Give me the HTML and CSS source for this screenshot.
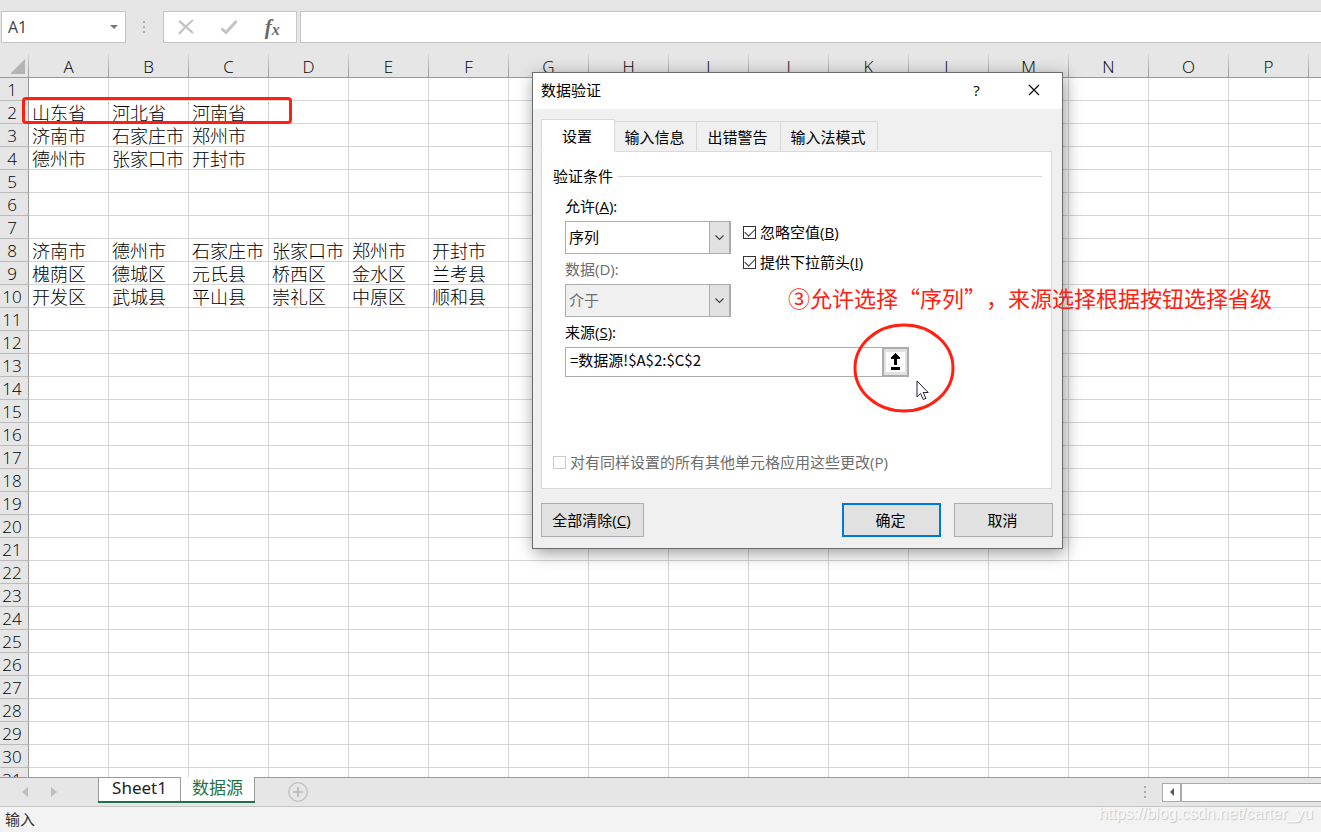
FILE: index.html
```html
<!DOCTYPE html>
<html lang="zh-CN">
<head>
<meta charset="utf-8">
<title>数据源</title>
<link rel="stylesheet" href="styles.css">
</head>
<body>
<header class="formula-bar">
  <div class="name-box">
    <input class="name-input" type="text" value="A1" aria-label="名称框">
    <svg class="name-arrow" width="8" height="4" viewBox="0 0 8 4"><path d="M0 0h8L4 4z" fill="#777"/></svg>
  </div>
  <svg class="grip" width="3" height="13" viewBox="0 0 3 13" fill="#ababab"><path d="M0 0h2v2H0zM0 5h2v2H0zM0 10h2v2H0z"/></svg>
  <div class="formula-tools">
    <button type="button" class="tool" aria-label="取消输入"><svg width="18" height="16" viewBox="0 0 18 16"><path d="M2 2c4 3 9 8 14 12M16 1C11 5 6 10 2 15" fill="none" stroke="#c3c3c3" stroke-width="2.2"/></svg></button>
    <button type="button" class="tool" aria-label="确认输入"><svg width="18" height="16" viewBox="0 0 18 16"><path d="M1.500 9.500L6 13.500 16.500 2" fill="none" stroke="#c3c3c3" stroke-width="3"/></svg></button>
    <button type="button" class="tool fx" aria-label="插入函数"><span>f</span><span class="fx-x">x</span></button>
  </div>
  <input class="formula-input" type="text" aria-label="编辑栏">
</header>

<main class="grid-area">
  <table class="grid">
    <thead><tr id="columns"><th class="corner"><svg width="15" height="15" viewBox="0 0 15 15"><path d="M15 0v15H0z" fill="#b4b4b4"/></svg></th></tr></thead>
    <tbody id="rows"></tbody>
  </table>
  <div class="range-mark"></div>
</main>

<footer>
  <div class="sheet-bar">
    <div class="sheet-nav">
      <button type="button" aria-label="上一个"><svg width="6" height="10" viewBox="0 0 6 10"><path d="M6 0v10L0 5z" fill="#bdbdbd"/></svg></button>
      <button type="button" aria-label="下一个"><svg width="6" height="10" viewBox="0 0 6 10"><path d="M0 0v10l6-5z" fill="#bdbdbd"/></svg></button>
    </div>
    <div class="sheets">
      <button type="button" class="sheet">Sheet1</button>
      <button type="button" class="sheet current">数据源</button>
    </div>
    <button type="button" class="add-sheet" aria-label="新建工作表"><svg width="20" height="20" viewBox="0 0 20 20" fill="none" stroke="#c0c0c0"><circle cx="10" cy="10" r="9.300" stroke-width="1.300"/><path d="M10 5v10M5 10h10" stroke-width="2"/></svg></button>
    <svg class="scroll-grip" width="3" height="13" viewBox="0 0 3 13" fill="#ababab"><path d="M0 0h2v2H0zM0 5h2v2H0zM0 10h2v2H0z"/></svg>
    <div class="scrollbar">
      <button type="button" aria-label="向左滚动"><svg width="4" height="8" viewBox="0 0 4 8"><path d="M4 0v8L0 4z" fill="#555"/></svg></button>
    </div>
  </div>
  <div class="status-bar">
    <span>输入</span>
    <span class="credit">https://blog.csdn.net/carter_yu</span>
  </div>
</footer>

<section class="dialog" role="dialog" aria-labelledby="dialog-title">
  <div class="dialog-head">
    <h1 id="dialog-title">数据验证</h1>
    <button type="button" class="head-button">?</button>
    <button type="button" class="head-button" aria-label="关闭"><svg width="12" height="12" viewBox="0 0 12 12"><path d="M1 1l10 10M11 1L1 11" stroke="#000" stroke-width="1.200"/></svg></button>
  </div>
  <form class="dialog-body">
    <div class="tabs" role="tablist">
      <button type="button" role="tab" class="tab active">设置</button>
      <button type="button" role="tab" class="tab first">输入信息</button>
      <button type="button" role="tab" class="tab">出错警告</button>
      <button type="button" role="tab" class="tab wide">输入法模式</button>
    </div>
    <div class="panel" role="tabpanel">
      <fieldset>
        <legend><span>验证条件</span></legend>
        <div class="criteria">
          <div class="fields">
            <label for="allow">允许(<u>A</u>):</label>
            <div class="combo"><select id="allow"><option>序列</option></select><span class="combo-arrow"><svg width="9" height="6" viewBox="0 0 9 6"><path d="M.5.500l4 4 4-4" fill="none" stroke="#444" stroke-width="1.200"/></svg></span></div>
            <label for="data" class="muted">数据(D):</label>
            <div class="combo"><select id="data" disabled><option>介于</option></select><span class="combo-arrow"><svg width="9" height="6" viewBox="0 0 9 6"><path d="M.5.500l4 4 4-4" fill="none" stroke="#444" stroke-width="1.200"/></svg></span></div>
          </div>
          <div class="options">
            <label class="check"><input type="checkbox" checked><span>忽略空值(<u>B</u>)</span></label>
            <label class="check"><input type="checkbox" checked><span>提供下拉箭头(<u>I</u>)</span></label>
          </div>
        </div>
        <div class="source">
          <label for="source">来源(<u>S</u>):</label>
          <div class="source-box">
            <input id="source" type="text" value="=数据源!$A$2:$C$2">
            <button type="button" aria-label="选择区域"><svg width="19" height="20" viewBox="0 0 19 20"><path d="M0 0h19v20H0z" fill="#fff"/><path d="M9 1h1v1h1v1h1v1h1v1h1v2h-3v6H8V7H5V5h1V4h1V3h1V2h1zM5 15h9v3H5z" fill="#000"/></svg></button>
          </div>
        </div>
      </fieldset>
      <label class="check muted apply"><input type="checkbox" disabled><span>对有同样设置的所有其他单元格应用这些更改(P)</span></label>
    </div>
    <div class="actions">
      <button type="button" class="action clear">全部清除(<u>C</u>)</button>
      <button type="submit" class="action primary">确定</button>
      <button type="button" class="action">取消</button>
    </div>
  </form>
</section>

<svg class="ring" width="102" height="90" viewBox="0 0 102 90"><ellipse cx="51" cy="45" rx="49" ry="43" fill="none" stroke="#ff2012" stroke-width="3"/></svg>
<svg class="pointer" width="14" height="21" viewBox="0 0 14 21"><path d="M1 1v16l3.500-3.500 2.800 6 2.700-1.200-2.800-5.800h5z" fill="#fff" stroke="#222236"/></svg>
<p class="note">③允许选择“序列”，来源选择根据按钮选择省级</p>
<script src="grid.js"></script>
</body>
</html>
```
FILE: grid.js
```js
const columns = [..."ABCDEFGHIJKLMNOP", ""];
const rowCount = 31;
const cells = {
  2: ["山东省", "河北省", "河南省"],
  3: ["济南市", "石家庄市", "郑州市"],
  4: ["德州市", "张家口市", "开封市"],
  8: ["济南市", "德州市", "石家庄市", "张家口市", "郑州市", "开封市"],
  9: ["槐荫区", "德城区", "元氏县", "桥西区", "金水区", "兰考县"],
  10: ["开发区", "武城县", "平山县", "崇礼区", "中原区", "顺和县"]
};

function add(parent, tag, text) {
  const element = document.createElement(tag);
  element.textContent = text;
  parent.append(element);
  return element;
}

const head = document.getElementById("columns");
for (const letter of columns) add(head, "th", letter);

const body = document.getElementById("rows");
for (let number = 1; number <= rowCount; number++) {
  const row = add(body, "tr", "");
  add(row, "th", number);
  for (let i = 0; i < columns.length; i++) {
    add(row, "td", (cells[number] || [])[i] || "");
  }
}
```
FILE: styles.css
```css
* { box-sizing: border-box; }

body {
  margin: 0;
  height: 100vh;
  display: flex;
  flex-direction: column;
  overflow: hidden;
  position: relative;
  background: #e6e6e6;
  color: #000;
  font: 15px/20px "Open Sans", "Noto Sans CJK SC", sans-serif;
}

button, input, select { font: inherit; color: inherit; margin: 0; }
button { padding: 0; border: 0; background: none; }
svg { display: block; flex: none; }

/* Formula bar */
.formula-bar {
  display: flex;
  align-items: center;
  height: 54px;
  padding: 0 0 0 1px;
  flex: none;
}
.name-box, .formula-tools, .formula-input {
  height: 32px;
  background: #fff;
  border: 1px solid #c6c6c6;
}
.name-box { display: flex; align-items: center; width: 125px; padding: 0 7px 0 6px; }
.name-input { flex: 1; min-width: 0; border: 0; padding: 0; background: none; color: #444; outline: 0; font-size: 16px; }
.grip { margin: 0 17px; }
.formula-tools { display: flex; align-items: center; width: 134px; padding-right: 2px; }
.tool { flex: 1; display: flex; justify-content: center; align-items: center; }
.fx { font: italic bold 21px/24px "Liberation Serif", serif; color: #6b6b6b; }
.fx-x { font-size: 16px; padding-top: 5px; }
.formula-input { flex: 1; margin-left: 3px; border-right: 0; outline: 0; }

/* Grid */
.grid-area { flex: 1; min-height: 0; overflow: hidden; position: relative; background: #fff; }
.grid { border-collapse: separate; border-spacing: 0; table-layout: fixed; width: 1389px; font-size: 18px; line-height: 22px; }
.grid th, .grid td { padding: 0; height: 23px; white-space: nowrap; }
.grid td {
  padding-left: 3px;
  border-right: 1px solid #d4d4d4;
  border-bottom: 1px solid #d4d4d4;
  font-family: "Noto Sans CJK SC", sans-serif;
  font-weight: 300;
}
.grid th { background: #e6e6e6; font-size: 17px; line-height: 20px; font-weight: 300; color: #000; padding-top: 2px; }
.grid thead th {
  width: 80px;
  height: 24px;
  border-bottom: 1px solid #999;
  border-right: 1px solid;
  border-image: linear-gradient(#d8d8d8, #999) 1;
}
.grid thead th:not(.corner) { padding-top: 3px; }
.grid thead .corner { width: 29px; padding: 0; }
.corner svg { margin: 2px 0 0 10px; }
.grid tbody th { border-right: 1px solid #999; border-bottom: 1px solid #bbb; padding-right: 4px; }
.range-mark {
  position: absolute;
  left: 22px;
  top: 43px;
  width: 270px;
  height: 27px;
  border: 3px solid #ff2012;
  border-radius: 4px;
}

/* Sheet bar */
.sheet-bar { display: flex; height: 29px; border-top: 1px solid #9b9b9b; align-items: center; position: relative; background: #e6e6e6; }
.sheet-nav { display: flex; gap: 23px; width: 98px; padding-left: 22px; }
.sheets { display: flex; align-self: flex-start; height: 26px; margin-top: -1px; border-bottom: 2px solid #217346; }
.sheet {
  width: 83px;
  padding-bottom: 3px;
  background: #fff;
  border: solid #9b9b9b;
  border-width: 1px 1px 0;
  font: 17px/20px "Noto Sans", "Noto Sans CJK SC", sans-serif;
  color: #222;
}
.sheet.current { width: 74px; border-width: 0 1px 0 0; color: #217346; }
.add-sheet { margin-left: 33px; }
.scroll-grip { margin: 0 15px 0 auto; }
.scrollbar { width: 159px; height: 19px; background: #fff; border: 1px solid #ababab; border-right: 0; display: flex; }
.scrollbar button { width: 19px; border-right: 2px solid #ababab; display: flex; align-items: center; justify-content: center; }
.status-bar {
  display: flex;
  justify-content: space-between;
  align-items: center;
  height: 26px;
  padding: 0 8px 2px 5px;
  background: #f3f3f3;
  border-top: 1px solid #c6c6c6;
  color: #333;
}
.credit { font: 16px/20px "Liberation Sans", sans-serif; color: #fafafa; text-shadow: 1px 1px 1px #c4c4c4; align-self: flex-start; margin-top: -3px; }

/* Dialog */
.dialog {
  position: absolute;
  left: 532px;
  top: 72px;
  width: 531px;
  border: 1px solid #6c6c6c;
  background: #f0f0f0;
  box-shadow: 2px 4px 16px rgba(0, 0, 0, .4);
}
.dialog-head { display: flex; align-items: center; height: 36px; padding-left: 8px; background: #fff; }
.dialog-head h1 { flex: 1; margin: 0; padding-bottom: 2px; font-size: 15px; font-weight: 400; }
.head-button { width: 57px; height: 36px; padding-bottom: 2px; display: flex; align-items: center; justify-content: center; }
.dialog-body { padding: 10px 9px 11px 8px; }

.tabs { display: flex; align-items: flex-end; margin-bottom: -1px; position: relative; }
.tab { width: 84px; height: 31px; padding-right: 2px; border: 1px solid #d9d9d9; border-left: 0; background: #f0f0f0; }
.tab.first { width: 82px; }
.tab.wide { width: 97px; }
.tab.active { width: 74px; height: 33px; background: #fff; border-left: 1px solid #d9d9d9; border-bottom-color: #fff; }
.panel { margin-right: 1px; padding: 14px 9px 16px 11px; background: #fff; border: 1px solid #d9d9d9; }

fieldset { margin: 0; padding: 0; border: 0; min-width: 0; }
legend { display: flex; align-items: center; gap: 5px; width: 100%; padding: 0; }
legend::after { content: ""; flex: 1; border-top: 1px solid #d9d9d9; }
.criteria { display: flex; gap: 12px; padding: 10px 0 0 12px; }
.fields { width: 166px; }
.fields label, .source > label { display: block; margin-bottom: 5px; }
.muted { color: #6d6d6d; }
.combo { display: flex; position: relative; margin-bottom: 5px; }
.combo select {
  appearance: none;
  width: 100%;
  height: 33px;
  padding: 0 26px 2px 3px;
  border: 1px solid #acacac;
  border-radius: 0;
  background: #fff;
  outline: 0;
}
.combo select:disabled { background: #f0f0f0; color: #6d6d6d; opacity: 1; }
.combo-arrow {
  position: absolute;
  top: 0;
  right: 0;
  width: 22px;
  height: 33px;
  border: 1px solid #acacac;
  border-right-width: 2px;
  background: #e1e1e1;
  display: flex;
  align-items: center;
  justify-content: center;
  pointer-events: none;
}
.options { display: flex; flex-direction: column; gap: 10px; padding-top: 26px; }
.check { display: flex; align-items: center; gap: 4px; }
.check input {
  appearance: none;
  width: 13px;
  height: 13px;
  flex: none;
  border: 1px solid #333;
  background: #fff;
  display: grid;
  place-items: center;
}
.check input:checked::before {
  content: "";
  width: 9px;
  height: 5px;
  margin-bottom: 3px;
  border: solid #333;
  border-width: 0 0 1px 1px;
  transform: rotate(-45deg);
}
.check input:disabled { border-color: #ccc; }
.source { padding-left: 12px; }
.source-box { display: flex; width: 344px; height: 30px; border: 1px solid #acacac; }
.source-box input { flex: 1; min-width: 0; padding: 0 4px 4px; border: 0; outline: 0; font-family: "Noto Sans CJK SC", sans-serif; }
.source-box button {
  width: 26px;
  border: solid #acacac;
  border-width: 1px 1px 1px 2px;
  background: #e1e1e1;
  display: flex;
  align-items: center;
  justify-content: center;
}
.apply { margin-top: 75px; }

.actions { display: flex; gap: 13px; margin-top: 14px; }
.action { width: 99px; height: 34px; border: 1px solid #adadad; background: #e1e1e1; padding-right: 2px; }
.action.clear { width: 103px; margin-right: auto; }
.action.primary { border: 2px solid #0078d7; }

/* Annotations over the window */
.ring { position: absolute; left: 853px; top: 323px; }
.pointer { position: absolute; left: 916px; top: 380px; }
.note {
  position: absolute;
  left: 788px;
  top: 282px;
  margin: 0;
  font: 22px/30px "Noto Sans CJK SC", sans-serif;
  text-spacing-trim: space-all;
  color: #ff2012;
  white-space: nowrap;
}
```
